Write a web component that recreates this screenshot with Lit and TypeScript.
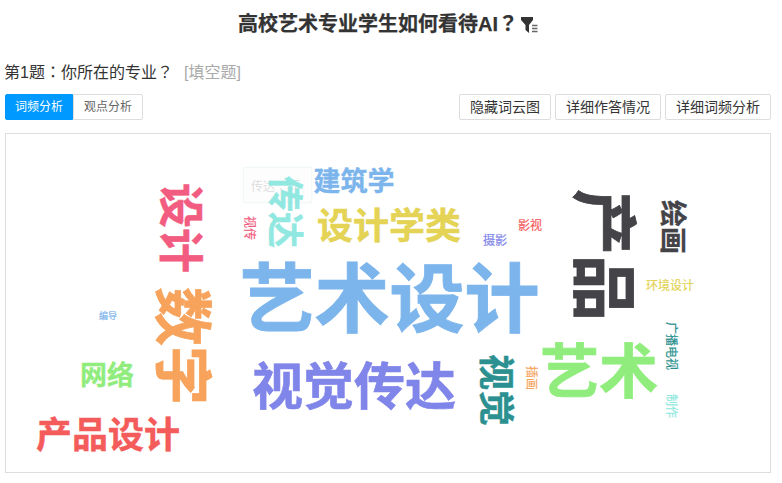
import { LitElement, html, css } from "lit";
import { customElement } from "lit/decorators.js";

interface Word { t: string; x: number; y: number; s: number; r: number; c: string; }

const WORDS: Word[] = [
  { t: "艺术设计", x: 389.5, y: 297, s: 75, r: 0, c: "#7cb5ec" },
  { t: "视觉传达", x: 354, y: 386, s: 51, r: 0, c: "#8085e9" },
  { t: "设计学类", x: 389, y: 225, s: 36, r: 0, c: "#e4d354" },
  { t: "建筑学", x: 354, y: 180, s: 27, r: 0, c: "#7cb5ec" },
  { t: "设计", x: 181, y: 228, s: 45, r: 90, c: "#f15c80" },
  { t: "数字", x: 183, y: 346, s: 59, r: 90, c: "#f7a35c" },
  { t: "传达", x: 286, y: 212, s: 36, r: 90, c: "#91e8e1" },
  { t: "产品", x: 605, y: 255, s: 66, r: 90, c: "#434348" },
  { t: "绘画", x: 673, y: 227, s: 27, r: 90, c: "#434348" },
  { t: "艺术", x: 599, y: 370, s: 59, r: 0, c: "#90ed7d" },
  { t: "视觉", x: 497, y: 390, s: 36, r: 90, c: "#2b908f" },
  { t: "网络", x: 107, y: 374, s: 27, r: 0, c: "#90ed7d" },
  { t: "产品设计", x: 108, y: 434, s: 36, r: 0, c: "#f45b5b" },
  { t: "影视", x: 530, y: 226, s: 12, r: 0, c: "#f45b5b" },
  { t: "摄影", x: 495, y: 241, s: 12, r: 0, c: "#8085e9" },
  { t: "环境设计", x: 670, y: 286, s: 12, r: 0, c: "#e4d354" },
  { t: "视传", x: 249, y: 228, s: 12, r: 90, c: "#f15c80" },
  { t: "编导", x: 108, y: 315, s: 9, r: 0, c: "#7cb5ec" },
  { t: "广播电视", x: 671, y: 346, s: 12, r: 90, c: "#2b908f" },
  { t: "制作", x: 671, y: 406, s: 12, r: 90, c: "#91e8e1" },
  { t: "插画", x: 531, y: 378, s: 12, r: 90, c: "#f7a35c" },
];

const PANEL_X = 5;
const PANEL_Y = 133;
const GLYPH_DROP = 0.055;

function wordStyle(w: Word) {
  const dx = w.r ? GLYPH_DROP * w.s : 0;
  const dy = w.r ? 0 : -GLYPH_DROP * w.s;
  const left = w.x - PANEL_X - 1 + dx;
  const top = w.y - PANEL_Y - 1 + dy;
  return `left:${left}px;top:${top}px;font-size:${w.s}px;color:${w.c};transform:translate(-50%,-50%) rotate(${w.r}deg)`;
}

@customElement("app-root")
export class AppRoot extends LitElement {
  static styles = css`
    :host {
      display: block;
      width: 782px;
      height: 483px;
      box-sizing: border-box;
      padding: 0 11px 0 5px;
      background: #fff;
      overflow: hidden;
      color: #333;
      font-family: "Liberation Sans", "Noto Sans CJK SC", sans-serif;
    }
    .title {
      display: flex;
      justify-content: center;
      align-items: center;
      gap: 3px;
      height: 47px;
      font-size: 20px;
      font-weight: 700;
      line-height: 1;
    }
    .title span { -webkit-text-stroke: 0.25px #333; }
    .title svg { display: block; margin-top: 3px; }
    .punct { font-family: "Noto Sans CJK TC", sans-serif; }
    .question {
      display: flex;
      align-items: center;
      gap: 11px;
      height: 47px;
      font-size: 16px;
      margin-left: -1px;
    }
    .question .kind { color: #aaa; }
    .toolbar {
      display: flex;
      justify-content: space-between;
      height: 26px;
      margin-bottom: 13px;
    }
    .group { display: flex; }
    .actions { display: flex; gap: 4px; }
    button {
      box-sizing: border-box;
      height: 26px;
      padding: 0 10px;
      border: 1px solid #ddd;
      border-radius: 2px;
      background: #fff;
      color: #333;
      font: inherit;
      font-size: 14px;
      line-height: 1;
    }
    .tab { font-size: 12px; color: #666; }
    .tab.on {
      width: 68px;
      padding: 0;
      background: #0099ff;
      border-color: #0099ff;
      color: #fff;
      border-radius: 2px 0 0 2px;
    }
    .tab.off { width: 70px; padding: 0; border-radius: 0 2px 2px 0; }
    .cloud {
      position: relative;
      box-sizing: border-box;
      height: 340px;
      border: 1px solid #ddd;
    }
    .word {
      position: absolute;
      white-space: nowrap;
      line-height: 1;
      font-family: "Noto Sans CJK SC", sans-serif;
      font-weight: 700;
      -webkit-text-stroke: 0.012em currentColor;
    }
    .word.small {
      font-weight: 400;
      -webkit-text-stroke: 0.2px currentColor;
    }
    .tip {
      position: absolute;
      left: 237px;
      top: 33px;
      box-sizing: border-box;
      width: 69px;
      height: 36px;
      display: flex;
      align-items: center;
      padding-left: 7px;
      border: 1px solid #f1f8f6;
      background: #fdfdfd;
      box-shadow: 0 0 2px #f2f7f6;
      color: #ddd;
      font-size: 12px;
      white-space: nowrap;
    }
  `;

  render() {
    return html`
      <div class="title">
        <span>高校艺术专业学生如何看待AI<span class="punct">？</span></span>
        <svg width="17" height="17" viewBox="0 0 17 17" aria-hidden="true">
          <path d="M0 0H12V3L8 8V16L4.5 13V8L0 3Z" fill="#333"></path>
          <path d="M11 8.5H16.5M11 11.5H16.5M11 14.5H16.5" stroke="#666" stroke-width="1.3" fill="none"></path>
        </svg>
      </div>
      <div class="question">
        <span>第1题<span class="punct">：</span>你所在的专业<span class="punct">？</span></span>
        <span class="kind">[填空题]</span>
      </div>
      <div class="toolbar">
        <div class="group">
          <button class="tab on">词频分析</button>
          <button class="tab off">观点分析</button>
        </div>
        <div class="actions">
          <button>隐藏词云图</button>
          <button>详细作答情况</button>
          <button>详细词频分析</button>
        </div>
      </div>
      <div class="cloud">
        <div class="tip">传达<span class="punct">：</span>15</div>
        ${WORDS.map((w) => html`<span class="word ${w.s < 20 ? "small" : ""}" style=${wordStyle(w)}>${w.t}</span>`)}
      </div>
    `;
  }
}
